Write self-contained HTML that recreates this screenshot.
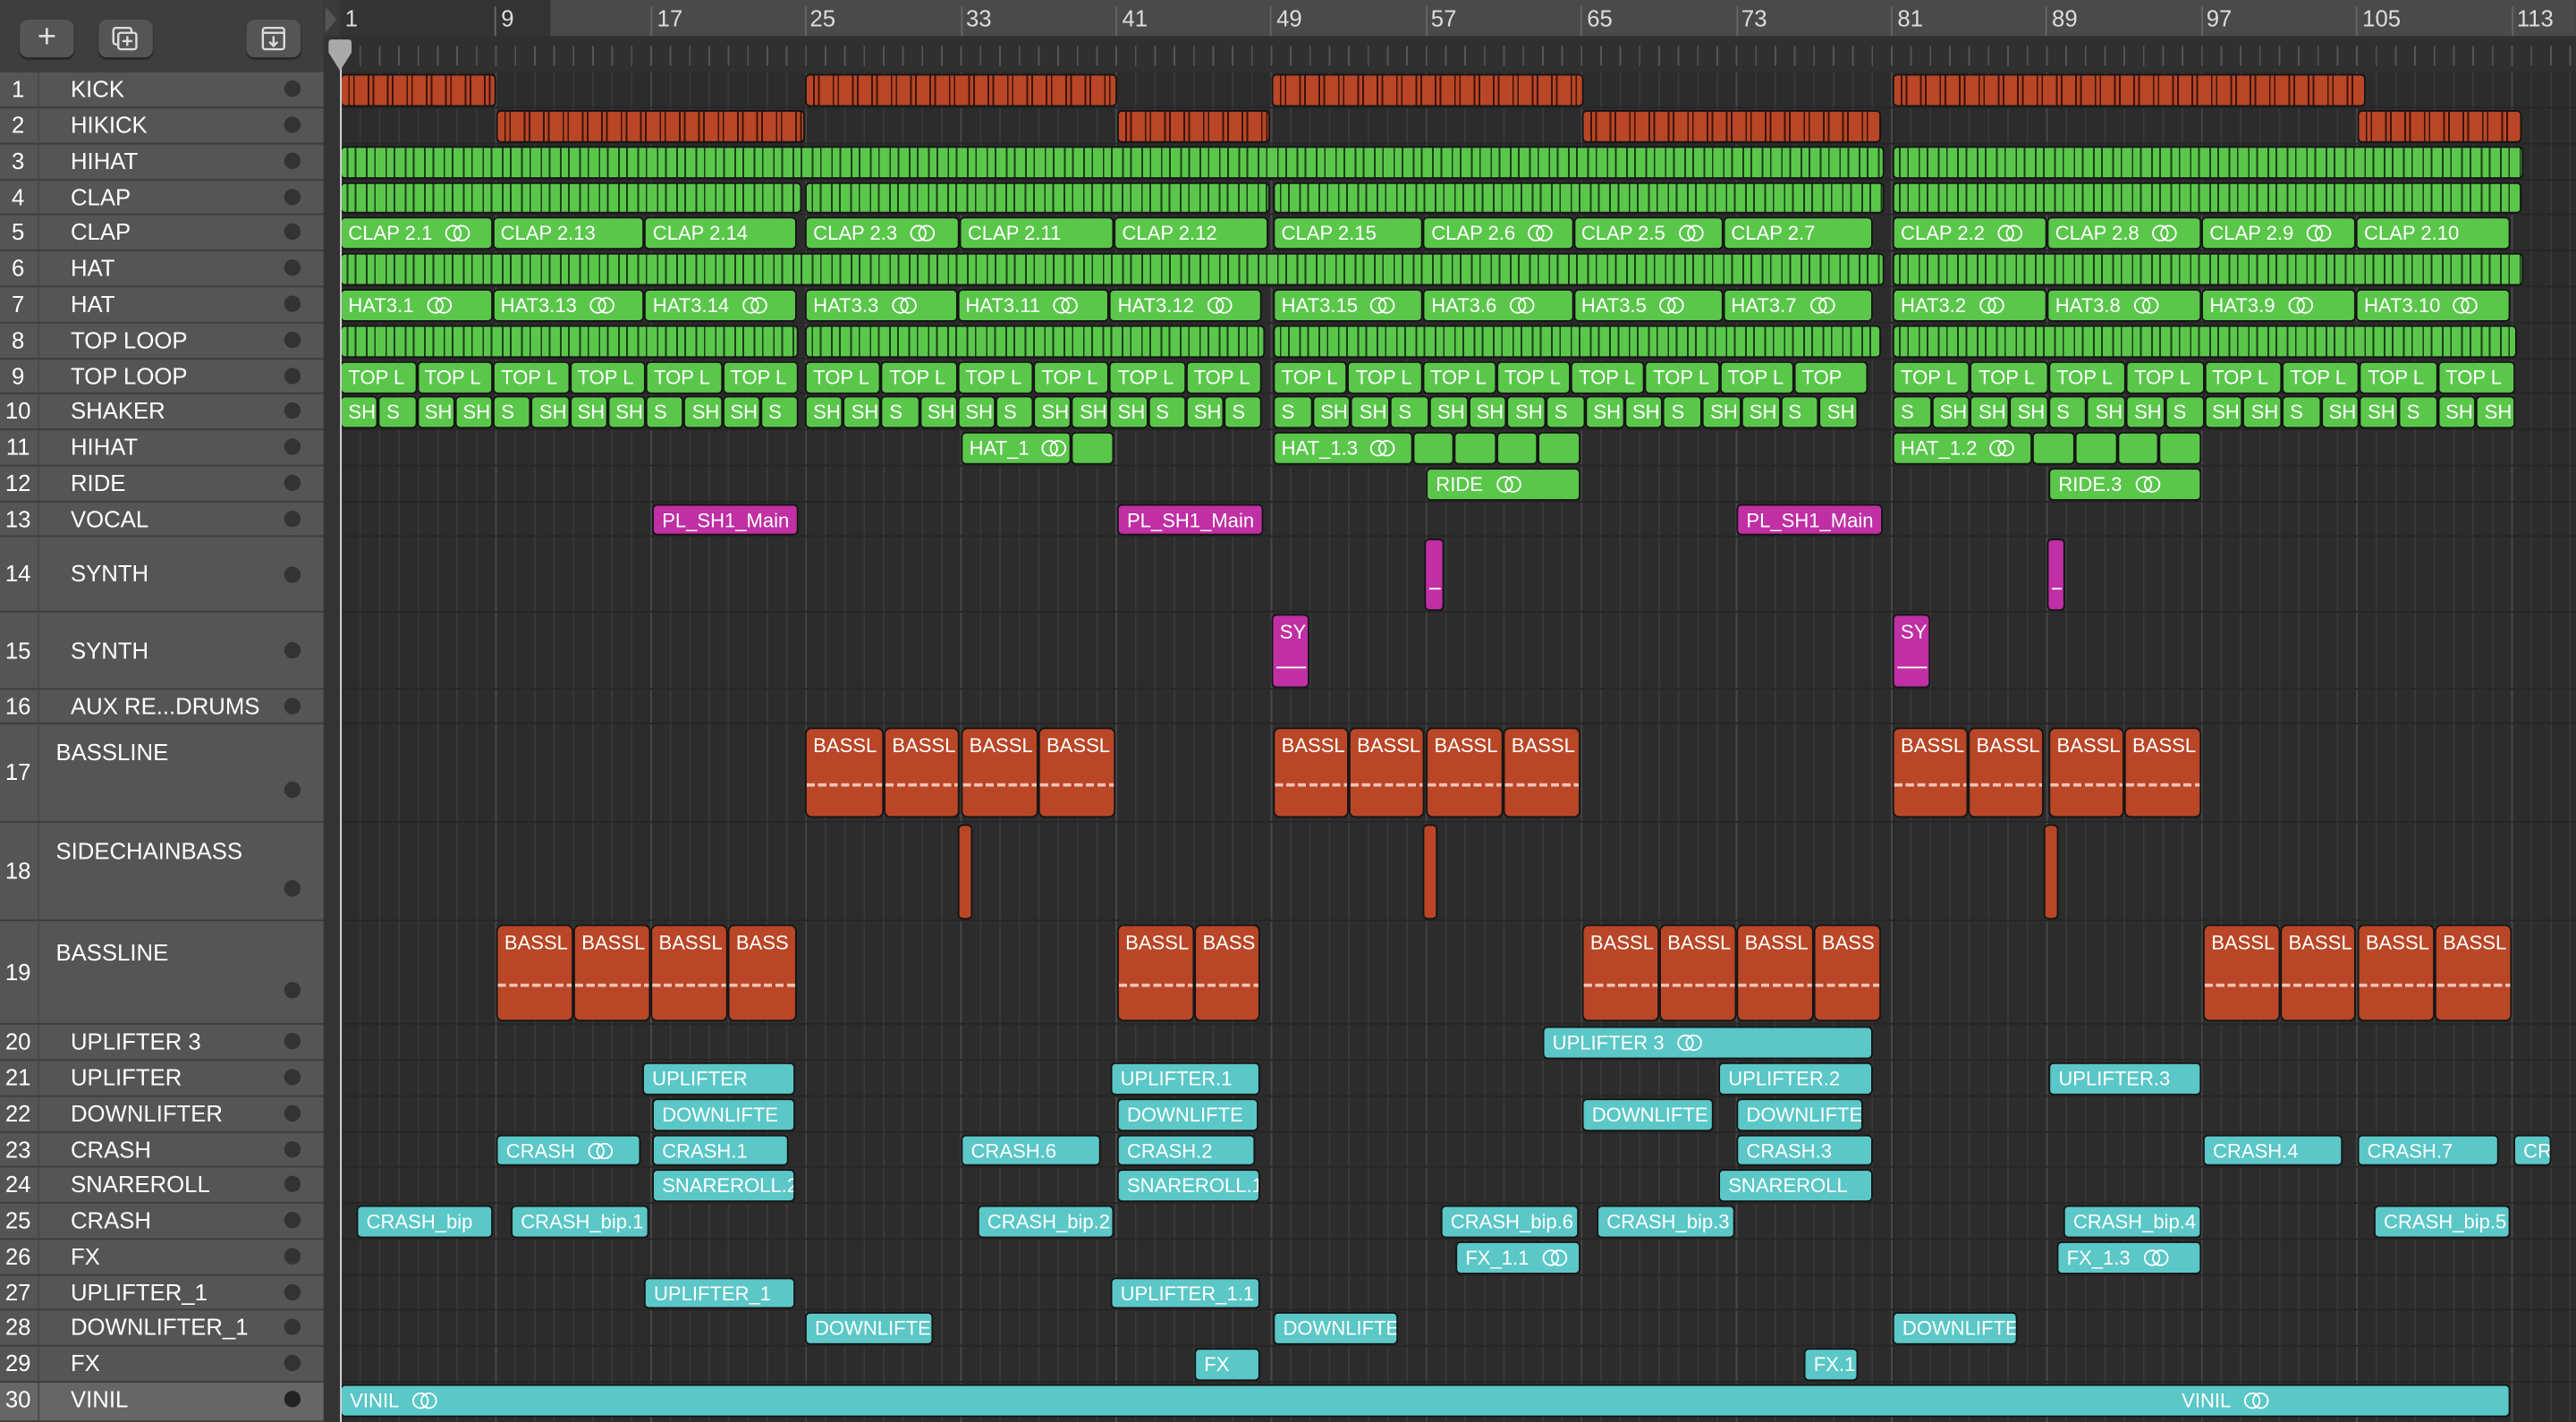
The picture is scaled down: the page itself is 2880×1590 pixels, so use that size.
<!DOCTYPE html>
<html><head><meta charset="utf-8">
<style>
html,body{margin:0;padding:0;width:2880px;height:1590px;overflow:hidden;background:#2c2c2c;}
#s{position:absolute;left:0;top:0;width:1568px;height:866px;transform:scale(1.8367,1.8361);transform-origin:0 0;font-family:"Liberation Sans",sans-serif;background:#2c2c2c;overflow:hidden;}
.a{position:absolute;}
.grid{left:207px;top:44px;width:1361px;height:822px;background:
 repeating-linear-gradient(90deg,#474747 0 1px,transparent 1px 94.4px),
 repeating-linear-gradient(90deg,#393939 0 1px,transparent 1px 11.8px),#2c2c2c;}
.hl{position:absolute;left:207px;width:1361px;height:1px;background:#262626;}
.r{position:absolute;box-sizing:border-box;border:1px solid #151515;border-radius:3px;color:#fff;font-size:12px;line-height:18px;padding-left:5px;white-space:nowrap;overflow:hidden;}
.g{background:#5ac74b;}
.red{background:#b94626;}
.c{background:#5bc7c7;}
.m{background:#c02fa3;}
.gs{background:repeating-linear-gradient(90deg,#5ac74b 0 3px,#1d3d18 3px 4px,#5ac74b 4px 8px,#1d3d18 8px 9px,#5ac74b 9px 11.8px);}
.rs{background:repeating-linear-gradient(90deg,#b94626 0 4px,#3a140a 4px 5px,#b94626 5px 7px,#3a140a 7px 8px,#b94626 8px 11.8px);}
.f{position:absolute;display:flex;height:20px;}
.f b{flex:1;box-sizing:border-box;border:1px solid #151515;border-radius:3px;color:#fff;font-weight:normal;font-size:12px;line-height:18px;padding-left:4px;white-space:nowrap;overflow:hidden;background:#5ac74b;}
.lp{display:inline-block;position:relative;width:14px;height:10px;margin-left:8px;vertical-align:-1px;}
.lp:before,.lp:after{content:"";position:absolute;top:0;width:8px;height:8px;border:1px solid #fff;border-radius:50%;}
.lp:before{left:0}.lp:after{left:5px}
.row{position:absolute;left:0;width:197px;background:#555;border-bottom:1px solid #3d3d3d;box-sizing:border-box;color:#fff;font-size:14px;}
.row .n{position:absolute;left:0;width:22px;text-align:center;}
.row .sep{position:absolute;left:23px;top:0;bottom:0;width:1px;background:#484848;}
.row .t{position:absolute;left:43px;}
.row .d{position:absolute;left:173px;width:10px;height:10px;border-radius:50%;background:#333;}
.bass{position:absolute;box-sizing:border-box;border:1px solid #151515;border-radius:4px;background:#b94626;color:#fff;font-size:12px;padding:3px 0 0 4px;overflow:hidden;white-space:nowrap;}
.bass:after{content:"";position:absolute;left:0;right:0;top:62%;height:2px;background:repeating-linear-gradient(90deg,#f3c3b5 0 5px,transparent 5px 7px);}
.btn{position:absolute;top:12px;width:33px;height:23px;border-radius:5px;background:#555;box-shadow:0 1px 1px #222;color:#ddd;text-align:center;}
.bn{position:absolute;top:3px;font-size:14px;color:#ddd;}
.bt{position:absolute;top:4px;width:1px;height:18px;background:#666;}
</style></head><body><div id="s">

<!-- left header -->
<div class="a" style="left:0;top:0;width:197px;height:44px;background:#3e3e3e;"></div>
<div class="btn" style="left:12px;font-size:20px;line-height:22px;">+</div>
<div class="btn" style="left:60px;"><svg width="33" height="23" viewBox="0 0 33 23"><rect x="9" y="5" width="11" height="10" rx="1.5" fill="none" stroke="#ddd" stroke-width="1.3"/><rect x="12" y="8" width="11" height="10" rx="1.5" fill="#555" stroke="#ddd" stroke-width="1.3"/><path d="M17.5 10v6M14.5 13h6" stroke="#ddd" stroke-width="1.3"/></svg></div>
<div class="btn" style="left:150px;"><svg width="33" height="23" viewBox="0 0 33 23"><rect x="10" y="5" width="13" height="13" rx="1.5" fill="none" stroke="#ddd" stroke-width="1.3"/><path d="M10 8h13M16.5 10v6M14 13.5l2.5 2.5 2.5-2.5" stroke="#ddd" stroke-width="1.3" fill="none"/></svg></div>
<div class="a" style="left:197px;top:0;width:10px;height:866px;background:#333;"></div>

<!-- ruler -->
<div class="a" style="left:207px;top:0;width:1361px;height:22px;background:#333;"></div>
<div class="a" style="left:335px;top:0;width:1233px;height:22px;background:#4a4a4a;"></div>
<div class="a" style="left:207px;top:22px;width:1361px;height:22px;background:repeating-linear-gradient(90deg,#555 0 1px,transparent 1px 11.8px) 0 6px/100% 12px no-repeat,#303030;"></div>
<div class="a" style="left:197px;top:0;width:10px;height:22px;background:#3a3a3a;"></div>
<div class="bt" style="left:301px"></div><div class="bt" style="left:396px"></div><div class="bt" style="left:490px"></div><div class="bt" style="left:585px"></div><div class="bt" style="left:679px"></div><div class="bt" style="left:773px"></div><div class="bt" style="left:868px"></div><div class="bt" style="left:962px"></div><div class="bt" style="left:1057px"></div><div class="bt" style="left:1151px"></div><div class="bt" style="left:1245px"></div><div class="bt" style="left:1340px"></div><div class="bt" style="left:1434px"></div><div class="bt" style="left:1529px"></div>
<div class="bn" style="left:210px">1</div><div class="bn" style="left:305px">9</div><div class="bn" style="left:400px">17</div><div class="bn" style="left:493px">25</div><div class="bn" style="left:588px">33</div><div class="bn" style="left:683px">41</div><div class="bn" style="left:777px">49</div><div class="bn" style="left:871px">57</div><div class="bn" style="left:966px">65</div><div class="bn" style="left:1060px">73</div><div class="bn" style="left:1155px">81</div><div class="bn" style="left:1249px">89</div><div class="bn" style="left:1343px">97</div><div class="bn" style="left:1438px">105</div><div class="bn" style="left:1532px">113</div>

<div class="a grid"></div>
<div class="hl" style="top:65px"></div><div class="hl" style="top:87px"></div><div class="hl" style="top:109px"></div><div class="hl" style="top:130px"></div><div class="hl" style="top:152px"></div><div class="hl" style="top:174px"></div><div class="hl" style="top:196px"></div><div class="hl" style="top:218px"></div><div class="hl" style="top:239px"></div><div class="hl" style="top:261px"></div><div class="hl" style="top:283px"></div><div class="hl" style="top:305px"></div><div class="hl" style="top:326px"></div><div class="hl" style="top:372px"></div><div class="hl" style="top:419px"></div><div class="hl" style="top:440px"></div><div class="hl" style="top:500px"></div><div class="hl" style="top:560px"></div><div class="hl" style="top:623px"></div><div class="hl" style="top:645px"></div><div class="hl" style="top:667px"></div><div class="hl" style="top:689px"></div><div class="hl" style="top:710px"></div><div class="hl" style="top:732px"></div><div class="hl" style="top:754px"></div><div class="hl" style="top:776px"></div><div class="hl" style="top:797px"></div><div class="hl" style="top:819px"></div><div class="hl" style="top:841px"></div>

<!-- track list -->
<div class="row" style="top:44px;height:22px;line-height:21px"><span class="n">1</span><span class="sep"></span><span class="t">KICK</span><span class="d" style="top:5px"></span></div>
<div class="row" style="top:66px;height:22px;line-height:21px"><span class="n">2</span><span class="sep"></span><span class="t">HIKICK</span><span class="d" style="top:5px"></span></div>
<div class="row" style="top:88px;height:22px;line-height:21px"><span class="n">3</span><span class="sep"></span><span class="t">HIHAT</span><span class="d" style="top:5px"></span></div>
<div class="row" style="top:110px;height:21px;line-height:20px"><span class="n">4</span><span class="sep"></span><span class="t">CLAP</span><span class="d" style="top:5px"></span></div>
<div class="row" style="top:131px;height:22px;line-height:21px"><span class="n">5</span><span class="sep"></span><span class="t">CLAP</span><span class="d" style="top:5px"></span></div>
<div class="row" style="top:153px;height:22px;line-height:21px"><span class="n">6</span><span class="sep"></span><span class="t">HAT</span><span class="d" style="top:5px"></span></div>
<div class="row" style="top:175px;height:22px;line-height:21px"><span class="n">7</span><span class="sep"></span><span class="t">HAT</span><span class="d" style="top:5px"></span></div>
<div class="row" style="top:197px;height:22px;line-height:21px"><span class="n">8</span><span class="sep"></span><span class="t">TOP LOOP</span><span class="d" style="top:5px"></span></div>
<div class="row" style="top:219px;height:21px;line-height:20px"><span class="n">9</span><span class="sep"></span><span class="t">TOP LOOP</span><span class="d" style="top:5px"></span></div>
<div class="row" style="top:240px;height:22px;line-height:21px"><span class="n">10</span><span class="sep"></span><span class="t">SHAKER</span><span class="d" style="top:5px"></span></div>
<div class="row" style="top:262px;height:22px;line-height:21px"><span class="n">11</span><span class="sep"></span><span class="t">HIHAT</span><span class="d" style="top:5px"></span></div>
<div class="row" style="top:284px;height:22px;line-height:21px"><span class="n">12</span><span class="sep"></span><span class="t">RIDE</span><span class="d" style="top:5px"></span></div>
<div class="row" style="top:306px;height:21px;line-height:20px"><span class="n">13</span><span class="sep"></span><span class="t">VOCAL</span><span class="d" style="top:5px"></span></div>
<div class="row" style="top:327px;height:46px;line-height:45px"><span class="n">14</span><span class="sep"></span><span class="t">SYNTH</span><span class="d" style="top:18px"></span></div>
<div class="row" style="top:373px;height:47px;line-height:46px"><span class="n">15</span><span class="sep"></span><span class="t">SYNTH</span><span class="d" style="top:18px"></span></div>
<div class="row" style="top:420px;height:21px;line-height:20px"><span class="n">16</span><span class="sep"></span><span class="t">AUX RE...DRUMS</span><span class="d" style="top:5px"></span></div>
<div class="row" style="top:441px;height:60px;"><span class="n" style="top:21px">17</span><span class="sep"></span><span class="t" style="left:34px;top:9px">BASSLINE</span><span class="d" style="top:35px"></span></div>
<div class="row" style="top:501px;height:60px;"><span class="n" style="top:21px">18</span><span class="sep"></span><span class="t" style="left:34px;top:9px">SIDECHAINBASS</span><span class="d" style="top:35px"></span></div>
<div class="row" style="top:561px;height:63px;"><span class="n" style="top:23px">19</span><span class="sep"></span><span class="t" style="left:34px;top:11px">BASSLINE</span><span class="d" style="top:37px"></span></div>
<div class="row" style="top:624px;height:22px;line-height:21px"><span class="n">20</span><span class="sep"></span><span class="t">UPLIFTER 3</span><span class="d" style="top:5px"></span></div>
<div class="row" style="top:646px;height:22px;line-height:21px"><span class="n">21</span><span class="sep"></span><span class="t">UPLIFTER</span><span class="d" style="top:5px"></span></div>
<div class="row" style="top:668px;height:22px;line-height:21px"><span class="n">22</span><span class="sep"></span><span class="t">DOWNLIFTER</span><span class="d" style="top:5px"></span></div>
<div class="row" style="top:690px;height:21px;line-height:20px"><span class="n">23</span><span class="sep"></span><span class="t">CRASH</span><span class="d" style="top:5px"></span></div>
<div class="row" style="top:711px;height:22px;line-height:21px"><span class="n">24</span><span class="sep"></span><span class="t">SNAREROLL</span><span class="d" style="top:5px"></span></div>
<div class="row" style="top:733px;height:22px;line-height:21px"><span class="n">25</span><span class="sep"></span><span class="t">CRASH</span><span class="d" style="top:5px"></span></div>
<div class="row" style="top:755px;height:22px;line-height:21px"><span class="n">26</span><span class="sep"></span><span class="t">FX</span><span class="d" style="top:5px"></span></div>
<div class="row" style="top:777px;height:21px;line-height:20px"><span class="n">27</span><span class="sep"></span><span class="t">UPLIFTER_1</span><span class="d" style="top:5px"></span></div>
<div class="row" style="top:798px;height:22px;line-height:21px"><span class="n">28</span><span class="sep"></span><span class="t">DOWNLIFTER_1</span><span class="d" style="top:5px"></span></div>
<div class="row" style="top:820px;height:22px;line-height:21px"><span class="n">29</span><span class="sep"></span><span class="t">FX</span><span class="d" style="top:5px"></span></div>
<div class="row" style="top:842px;height:24px;line-height:21px;background:#666"><span class="n">30</span><span class="sep"></span><span class="t">VINIL</span><span class="d" style="top:5px;background:#222"></span></div>

<!-- row 1/2 kick -->
<div class="r rs" style="left:207px;top:45px;width:95px;height:20px"></div>
<div class="r rs" style="left:490px;top:45px;width:190px;height:20px"></div>
<div class="r rs" style="left:774px;top:45px;width:190px;height:20px"></div>
<div class="r rs" style="left:1152px;top:45px;width:288px;height:20px"></div>
<div class="r rs" style="left:302px;top:67px;width:188px;height:20px"></div>
<div class="r rs" style="left:680px;top:67px;width:93px;height:20px"></div>
<div class="r rs" style="left:963px;top:67px;width:182px;height:20px"></div>
<div class="r rs" style="left:1435px;top:67px;width:100px;height:20px"></div>
<!-- row 3,4,6,8 stripes -->
<div class="r gs" style="left:207px;top:89px;width:940px;height:20px"></div>
<div class="r gs" style="left:1152px;top:89px;width:384px;height:20px"></div>
<div class="r gs" style="left:207px;top:111px;width:281px;height:19px"></div>
<div class="r gs" style="left:490px;top:111px;width:283px;height:19px"></div>
<div class="r gs" style="left:775px;top:111px;width:372px;height:19px"></div>
<div class="r gs" style="left:1152px;top:111px;width:383px;height:19px"></div>
<div class="r gs" style="left:207px;top:154px;width:940px;height:20px"></div>
<div class="r gs" style="left:1152px;top:154px;width:384px;height:20px"></div>
<div class="r gs" style="left:207px;top:198px;width:279px;height:20px"></div>
<div class="r gs" style="left:490px;top:198px;width:280px;height:20px"></div>
<div class="r gs" style="left:775px;top:198px;width:370px;height:20px"></div>
<div class="r gs" style="left:1152px;top:198px;width:380px;height:20px"></div>

<!-- row 5 -->
<div class="f" style="left:207px;top:132px;width:278px"><b>CLAP 2.1<span class="lp"></span></b><b>CLAP 2.13</b><b>CLAP 2.14</b></div>
<div class="f" style="left:490px;top:132px;width:282px"><b>CLAP 2.3<span class="lp"></span></b><b>CLAP 2.11</b><b>CLAP 2.12</b></div>
<div class="f" style="left:775px;top:132px;width:365px"><b>CLAP 2.15</b><b>CLAP 2.6<span class="lp"></span></b><b>CLAP 2.5<span class="lp"></span></b><b>CLAP 2.7</b></div>
<div class="f" style="left:1152px;top:132px;width:376px"><b>CLAP 2.2<span class="lp"></span></b><b>CLAP 2.8<span class="lp"></span></b><b>CLAP 2.9<span class="lp"></span></b><b>CLAP 2.10</b></div>
<!-- row 7 -->
<div class="f" style="left:207px;top:176px;width:278px"><b>HAT3.1<span class="lp"></span></b><b>HAT3.13<span class="lp"></span></b><b>HAT3.14<span class="lp"></span></b></div>
<div class="f" style="left:490px;top:176px;width:278px"><b>HAT3.3<span class="lp"></span></b><b>HAT3.11<span class="lp"></span></b><b>HAT3.12<span class="lp"></span></b></div>
<div class="f" style="left:775px;top:176px;width:365px"><b>HAT3.15<span class="lp"></span></b><b>HAT3.6<span class="lp"></span></b><b>HAT3.5<span class="lp"></span></b><b>HAT3.7<span class="lp"></span></b></div>
<div class="f" style="left:1152px;top:176px;width:376px"><b>HAT3.2<span class="lp"></span></b><b>HAT3.8<span class="lp"></span></b><b>HAT3.9<span class="lp"></span></b><b>HAT3.10<span class="lp"></span></b></div>
<!-- row 9 -->
<div class="f" style="left:207px;top:220px;width:279px"><b>TOP L</b><b>TOP L</b><b>TOP L</b><b>TOP L</b><b>TOP L</b><b>TOP L</b></div>
<div class="f" style="left:490px;top:220px;width:278px"><b>TOP L</b><b>TOP L</b><b>TOP L</b><b>TOP L</b><b>TOP L</b><b>TOP L</b></div>
<div class="f" style="left:775px;top:220px;width:362px"><b>TOP L</b><b>TOP L</b><b>TOP L</b><b>TOP L</b><b>TOP L</b><b>TOP L</b><b>TOP L</b><b>TOP</b></div>
<div class="f" style="left:1152px;top:220px;width:379px"><b>TOP L</b><b>TOP L</b><b>TOP L</b><b>TOP L</b><b>TOP L</b><b>TOP L</b><b>TOP L</b><b>TOP L</b></div>
<!-- row 10 -->
<div class="f" style="left:207px;top:241px;width:279px"><b>SH</b><b>S</b><b>SH</b><b>SH</b><b>S</b><b>SH</b><b>SH</b><b>SH</b><b>S</b><b>SH</b><b>SH</b><b>S</b></div>
<div class="f" style="left:490px;top:241px;width:278px"><b>SH</b><b>SH</b><b>S</b><b>SH</b><b>SH</b><b>S</b><b>SH</b><b>SH</b><b>SH</b><b>S</b><b>SH</b><b>S</b></div>
<div class="f" style="left:775px;top:241px;width:356px"><b>S</b><b>SH</b><b>SH</b><b>S</b><b>SH</b><b>SH</b><b>SH</b><b>S</b><b>SH</b><b>SH</b><b>S</b><b>SH</b><b>SH</b><b>S</b><b>SH</b></div>
<div class="f" style="left:1152px;top:241px;width:379px"><b>S</b><b>SH</b><b>SH</b><b>SH</b><b>S</b><b>SH</b><b>SH</b><b>S</b><b>SH</b><b>SH</b><b>S</b><b>SH</b><b>SH</b><b>S</b><b>SH</b><b>SH</b></div>
<!-- row 11 -->
<div class="f" style="left:585px;top:263px;width:93px"><b style="flex:3">HAT_1<span class="lp"></span></b><b style="flex:1"></b></div>
<div class="f" style="left:775px;top:263px;width:187px"><b style="flex:4">HAT_1.3<span class="lp"></span></b><b></b><b></b><b></b><b></b></div>
<div class="f" style="left:1152px;top:263px;width:188px"><b style="flex:4">HAT_1.2<span class="lp"></span></b><b></b><b></b><b></b><b></b></div>
<!-- row 12 -->
<div class="r g" style="left:868px;top:285px;width:94px;height:20px">RIDE<span class="lp"></span></div>
<div class="r g" style="left:1247px;top:285px;width:93px;height:20px">RIDE.3<span class="lp"></span></div>
<!-- row 13 -->
<div class="r m" style="left:397px;top:307px;width:89px;height:19px">PL_SH1_Main</div>
<div class="r m" style="left:680px;top:307px;width:89px;height:19px">PL_SH1_Main</div>
<div class="r m" style="left:1057px;top:307px;width:89px;height:19px">PL_SH1_Main</div>
<!-- row 14,15 -->
<div class="r m" style="left:867px;top:328px;width:12px;height:44px;padding:0"><div class="a" style="left:2px;top:29px;width:7px;height:1px;background:#fff"></div></div>
<div class="r m" style="left:1246px;top:328px;width:11px;height:44px;padding:0"><div class="a" style="left:2px;top:29px;width:6px;height:1px;background:#fff"></div></div>
<div class="r m" style="left:774px;top:374px;width:23px;height:45px;padding-left:4px;line-height:20px">SY<div class="a" style="left:2px;top:31px;width:18px;height:1px;background:#fff"></div></div>
<div class="r m" style="left:1152px;top:374px;width:23px;height:45px;padding-left:4px;line-height:20px">SY<div class="a" style="left:2px;top:31px;width:18px;height:1px;background:#fff"></div></div>
<!-- row 17 -->
<div class="bass" style="left:490px;top:443px;width:48px;height:55px">BASSL</div>
<div class="bass" style="left:538px;top:443px;width:46px;height:55px">BASSL</div>
<div class="bass" style="left:585px;top:443px;width:47px;height:55px">BASSL</div>
<div class="bass" style="left:632px;top:443px;width:47px;height:55px">BASSL</div>
<div class="bass" style="left:775px;top:443px;width:46px;height:55px">BASSL</div>
<div class="bass" style="left:821px;top:443px;width:46px;height:55px">BASSL</div>
<div class="bass" style="left:868px;top:443px;width:47px;height:55px">BASSL</div>
<div class="bass" style="left:915px;top:443px;width:47px;height:55px">BASSL</div>
<div class="bass" style="left:1152px;top:443px;width:46px;height:55px">BASSL</div>
<div class="bass" style="left:1198px;top:443px;width:46px;height:55px">BASSL</div>
<div class="bass" style="left:1247px;top:443px;width:46px;height:55px">BASSL</div>
<div class="bass" style="left:1293px;top:443px;width:47px;height:55px">BASSL</div>
<!-- row 18 -->
<div class="r red" style="left:583px;top:502px;width:9px;height:58px;padding:0"></div>
<div class="r red" style="left:866px;top:502px;width:9px;height:58px;padding:0"></div>
<div class="r red" style="left:1244px;top:502px;width:9px;height:58px;padding:0"></div>
<!-- row 19 -->
<div class="bass" style="left:302px;top:563px;width:47px;height:59px">BASSL</div>
<div class="bass" style="left:349px;top:563px;width:47px;height:59px">BASSL</div>
<div class="bass" style="left:396px;top:563px;width:47px;height:59px">BASSL</div>
<div class="bass" style="left:443px;top:563px;width:42px;height:59px">BASS</div>
<div class="bass" style="left:680px;top:563px;width:47px;height:59px">BASSL</div>
<div class="bass" style="left:727px;top:563px;width:40px;height:59px">BASS</div>
<div class="bass" style="left:963px;top:563px;width:47px;height:59px">BASSL</div>
<div class="bass" style="left:1010px;top:563px;width:47px;height:59px">BASSL</div>
<div class="bass" style="left:1057px;top:563px;width:47px;height:59px">BASSL</div>
<div class="bass" style="left:1104px;top:563px;width:41px;height:59px">BASS</div>
<div class="bass" style="left:1341px;top:563px;width:47px;height:59px">BASSL</div>
<div class="bass" style="left:1388px;top:563px;width:46px;height:59px">BASSL</div>
<div class="bass" style="left:1435px;top:563px;width:47px;height:59px">BASSL</div>
<div class="bass" style="left:1482px;top:563px;width:47px;height:59px">BASSL</div>

<!-- cyan rows -->
<div class="r c" style="left:939px;top:625px;width:201px;height:20px">UPLIFTER 3<span class="lp"></span></div>
<div class="r c" style="left:391px;top:647px;width:93px;height:20px">UPLIFTER</div>
<div class="r c" style="left:676px;top:647px;width:91px;height:20px">UPLIFTER.1</div>
<div class="r c" style="left:1046px;top:647px;width:94px;height:20px">UPLIFTER.2</div>
<div class="r c" style="left:1247px;top:647px;width:93px;height:20px">UPLIFTER.3</div>
<div class="r c" style="left:397px;top:669px;width:87px;height:20px">DOWNLIFTE</div>
<div class="r c" style="left:680px;top:669px;width:86px;height:20px">DOWNLIFTE</div>
<div class="r c" style="left:963px;top:669px;width:80px;height:20px">DOWNLIFTE</div>
<div class="r c" style="left:1057px;top:669px;width:77px;height:20px">DOWNLIFTE</div>
<div class="r c" style="left:302px;top:691px;width:88px;height:19px">CRASH<span class="lp"></span></div>
<div class="r c" style="left:397px;top:691px;width:83px;height:19px">CRASH.1</div>
<div class="r c" style="left:585px;top:691px;width:85px;height:19px">CRASH.6</div>
<div class="r c" style="left:680px;top:691px;width:84px;height:19px">CRASH.2</div>
<div class="r c" style="left:1057px;top:691px;width:83px;height:19px">CRASH.3</div>
<div class="r c" style="left:1341px;top:691px;width:85px;height:19px">CRASH.4</div>
<div class="r c" style="left:1435px;top:691px;width:86px;height:19px">CRASH.7</div>
<div class="r c" style="left:1530px;top:691px;width:23px;height:19px">CR</div>
<div class="r c" style="left:397px;top:712px;width:87px;height:20px">SNAREROLL.2</div>
<div class="r c" style="left:680px;top:712px;width:87px;height:20px">SNAREROLL.1</div>
<div class="r c" style="left:1046px;top:712px;width:94px;height:20px">SNAREROLL</div>
<div class="r c" style="left:217px;top:734px;width:83px;height:20px">CRASH_bip</div>
<div class="r c" style="left:311px;top:734px;width:84px;height:20px">CRASH_bip.1</div>
<div class="r c" style="left:595px;top:734px;width:83px;height:20px">CRASH_bip.2</div>
<div class="r c" style="left:877px;top:734px;width:84px;height:20px">CRASH_bip.6</div>
<div class="r c" style="left:972px;top:734px;width:84px;height:20px">CRASH_bip.3</div>
<div class="r c" style="left:1256px;top:734px;width:84px;height:20px">CRASH_bip.4</div>
<div class="r c" style="left:1445px;top:734px;width:83px;height:20px">CRASH_bip.5</div>
<div class="r c" style="left:886px;top:756px;width:76px;height:20px">FX_1.1<span class="lp"></span></div>
<div class="r c" style="left:1252px;top:756px;width:88px;height:20px">FX_1.3<span class="lp"></span></div>
<div class="r c" style="left:392px;top:778px;width:92px;height:19px">UPLIFTER_1</div>
<div class="r c" style="left:676px;top:778px;width:91px;height:19px">UPLIFTER_1.1</div>
<div class="r c" style="left:490px;top:799px;width:78px;height:20px">DOWNLIFTE</div>
<div class="r c" style="left:775px;top:799px;width:76px;height:20px">DOWNLIFTE</div>
<div class="r c" style="left:1152px;top:799px;width:76px;height:20px">DOWNLIFTE</div>
<div class="r c" style="left:727px;top:821px;width:40px;height:20px">FX</div>
<div class="r c" style="left:1098px;top:821px;width:33px;height:20px">FX.1</div>
<div class="r c" style="left:207px;top:843px;width:1321px;height:20px">VINIL<span class="lp"></span><span style="position:absolute;left:1120px;">VINIL<span class="lp"></span></span></div>

<!-- playhead -->
<div class="a" style="left:207px;top:24px;width:1px;height:842px;background:#ddd;"></div>
<svg class="a" style="left:198px;top:24px" width="18" height="20" viewBox="0 0 18 20"><path d="M2 2Q2 0 4 0H14Q16 0 16 2V8L9 19L2 8Z" fill="#aaa"/></svg>
<svg class="a" style="left:198px;top:4px" width="8" height="16" viewBox="0 0 8 16"><path d="M0 0L7 8L0 16Z" fill="#555"/></svg>
</div></body></html>
